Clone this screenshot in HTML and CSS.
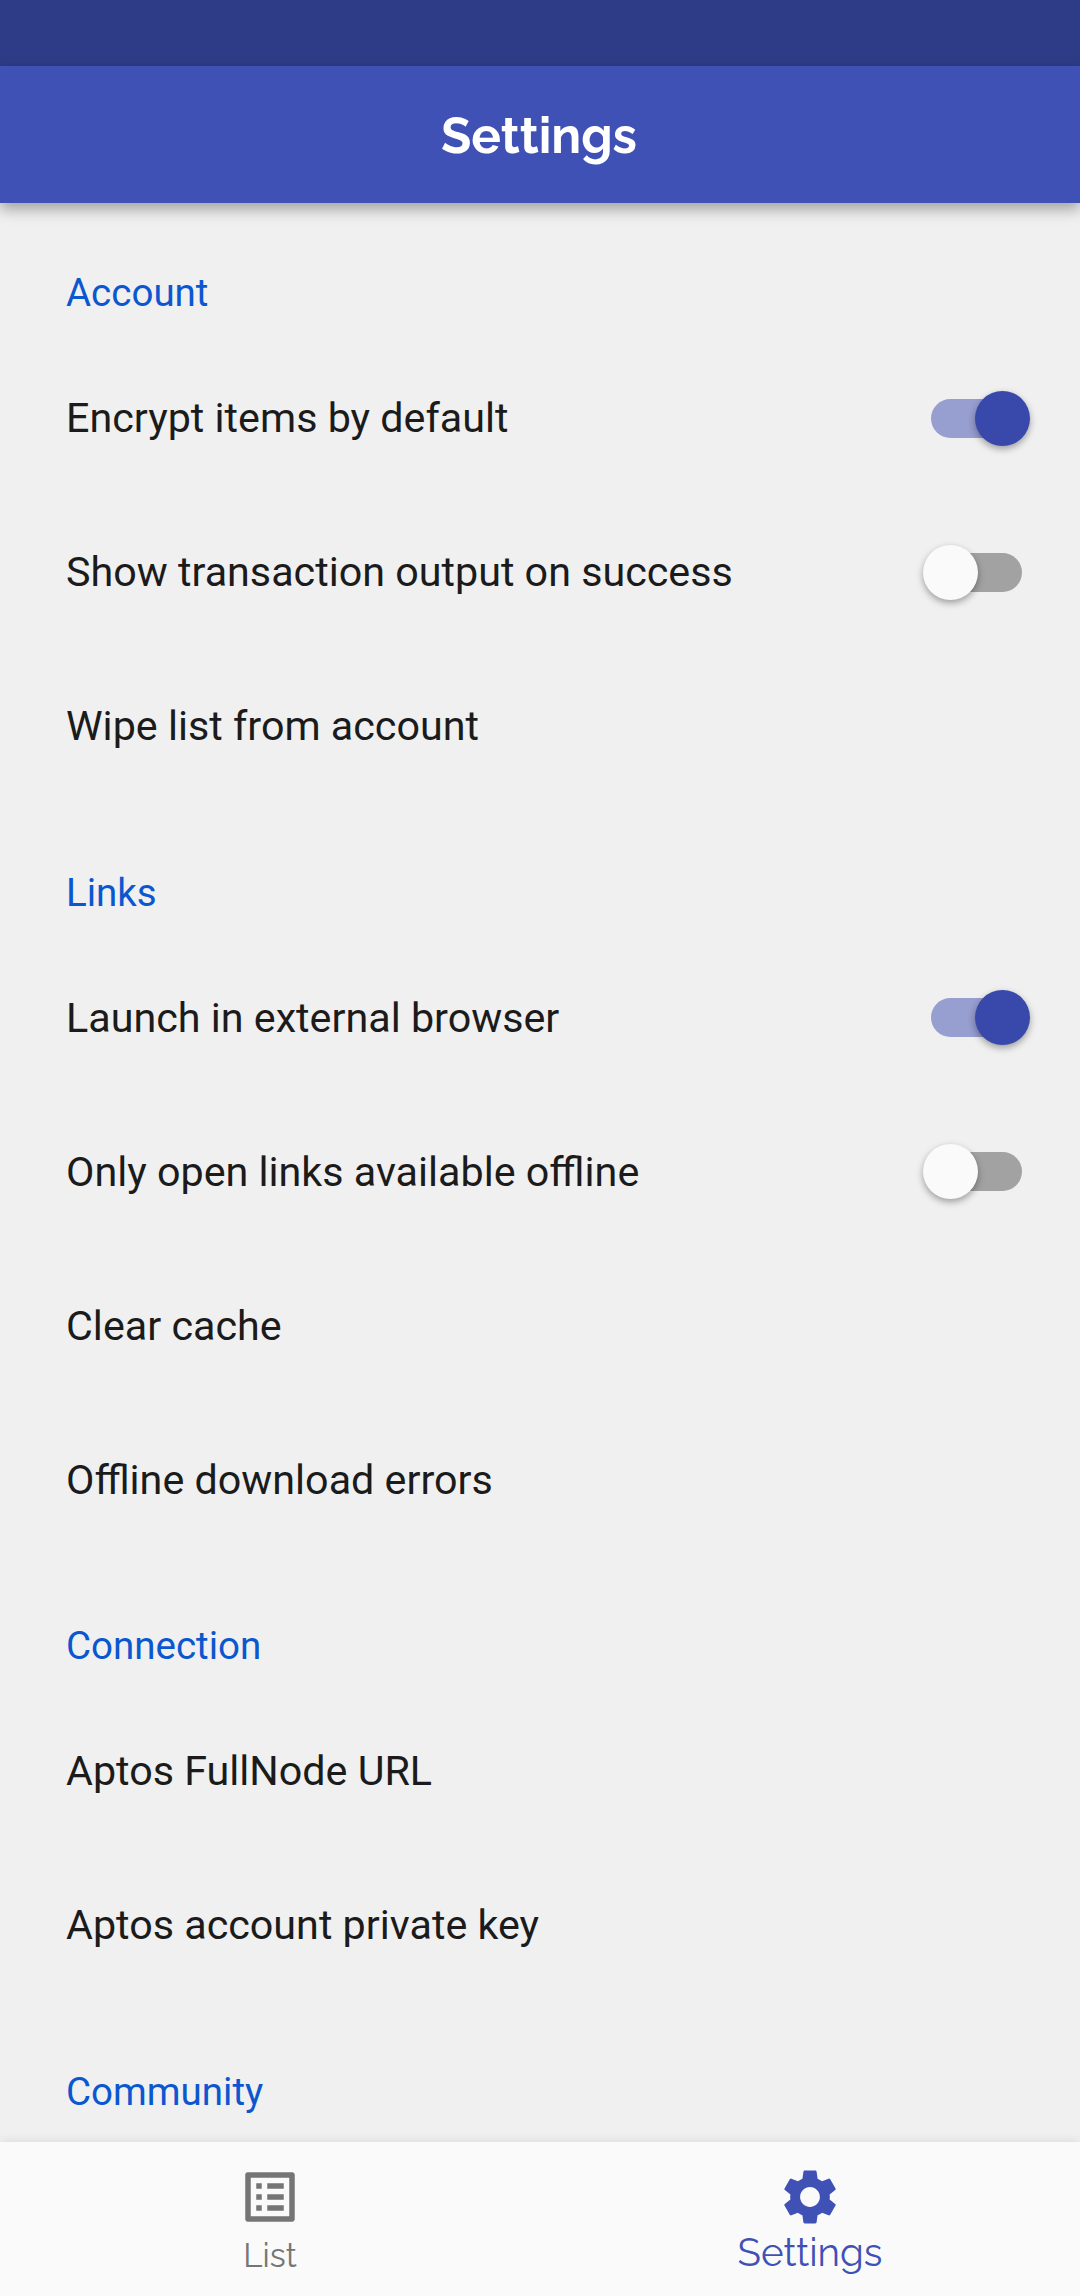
FILE: index.html
```html
<!DOCTYPE html>
<html lang="en">
<head>
<meta charset="utf-8">
<title>Settings</title>
<link rel="stylesheet" href="styles.css">
</head>
<body>
<div class="status-bar"></div>
<header class="app-bar"><h1 class="title">Settings</h1></header>
<main class="settings">
  <section class="group">
    <h2 class="group-title">Account</h2>
    <div class="row"><span>Encrypt items by default</span><div class="switch on"><i class="thumb"></i></div></div>
    <div class="row"><span>Show transaction output on success</span><div class="switch"><i class="thumb"></i></div></div>
    <div class="row"><span>Wipe list from account</span></div>
  </section>
  <section class="group">
    <h2 class="group-title">Links</h2>
    <div class="row"><span>Launch in external browser</span><div class="switch on"><i class="thumb"></i></div></div>
    <div class="row"><span>Only open links available offline</span><div class="switch"><i class="thumb"></i></div></div>
    <div class="row"><span>Clear cache</span></div>
    <div class="row"><span>Offline download errors</span></div>
  </section>
  <section class="group">
    <h2 class="group-title">Connection</h2>
    <div class="row"><span>Aptos FullNode URL</span></div>
    <div class="row"><span>Aptos account private key</span></div>
  </section>
  <section class="group">
    <h2 class="group-title">Community</h2>
  </section>
</main>
<nav class="bottom-nav">
  <a class="tab">
    <svg class="icon" viewBox="0 0 24 24"><path fill="currentColor" d="M19 5v14H5V5h14m1.1-2H3.9c-.5 0-.9.4-.9.9v16.2c0 .4.4.9.9.9h16.2c.4 0 .9-.5.9-.9V3.9c0-.5-.5-.9-.9-.9zM11 7h6v2h-6V7zm0 4h6v2h-6v-2zm0 4h6v2h-6zM7 7h2v2H7zm0 4h2v2H7zm0 4h2v2H7z"/></svg>
    <span class="tab-label">List</span>
  </a>
  <a class="tab active">
    <svg class="icon" viewBox="0 0 24 24"><path fill="currentColor" d="M19.14 12.94c.04-.3.06-.61.06-.94 0-.32-.02-.64-.07-.94l2.03-1.58c.18-.14.23-.41.12-.61l-1.92-3.32c-.12-.22-.37-.29-.59-.22l-2.39.96c-.5-.38-1.03-.7-1.62-.94l-.36-2.54c-.04-.24-.24-.41-.48-.41h-3.84c-.24 0-.43.17-.47.41l-.36 2.54c-.59.24-1.13.57-1.62.94l-2.39-.96c-.22-.08-.47 0-.59.22L2.74 8.87c-.12.21-.08.47.12.61l2.03 1.58c-.05.3-.09.63-.09.94s.02.64.07.94l-2.03 1.58c-.18.14-.23.41-.12.61l1.92 3.32c.12.22.37.29.59.22l2.39-.96c.5.38 1.03.7 1.62.94l.36 2.54c.05.24.24.41.48.41h3.84c.24 0 .44-.17.47-.41l.36-2.54c.59-.24 1.13-.56 1.62-.94l2.39.96c.22.08.47 0 .59-.22l1.92-3.32c.12-.22.07-.47-.12-.61l-2.01-1.58zM12 15.6c-1.98 0-3.6-1.62-3.6-3.6s1.62-3.6 3.6-3.6 3.6 1.62 3.6 3.6-1.62 3.6-3.6 3.6z"/></svg>
    <span class="tab-label">Settings</span>
  </a>
</nav>
</body>
</html>
```
FILE: styles.css
```css
* { box-sizing: border-box; }
body {
  margin: 0;
  height: 2296px;
  display: flex;
  flex-direction: column;
  overflow: hidden;
  background: #f0f0f0;
  font-family: Roboto, sans-serif;
  color: #1b1b1b;
}
.status-bar { height: 66px; flex: none; background: #2e3c87; }
.app-bar {
  height: 137px;
  flex: none;
  display: flex;
  align-items: center;
  justify-content: center;
  padding: 2px 2px 0 0;
  background: #3f51b5;
  box-shadow: 0 6px 14px rgba(0, 0, 0, .34);
  z-index: 1;
}
.title {
  margin: 0;
  font: 700 49.5px/60px Raleway, Lato, sans-serif;
  color: #fff;
}
.settings { flex: 1; min-height: 0; overflow: hidden; padding-top: 43px; }
.group { margin-bottom: 42.5px; }
.group-title {
  margin: 0;
  padding: 0 66px;
  height: 95px;
  line-height: 93.5px;
  font-size: 38.5px;
  font-weight: 400;
  color: #0b57d0;
}
.row {
  height: 154px;
  padding: 0 58px 0 66px;
  display: flex;
  align-items: center;
  justify-content: space-between;
  font-size: 41.25px;
}
.switch {
  width: 91px;
  height: 39px;
  border-radius: 20px;
  display: flex;
  align-items: center;
  background: #a2a2a2;
}
.thumb {
  flex: none;
  width: 55px;
  height: 55px;
  margin: 0 -8px;
  border-radius: 50%;
  background: #fafafa;
  box-shadow: 0 3px 7px rgba(0, 0, 0, .35);
}
.switch.on { justify-content: flex-end; background: #979ed0; }
.switch.on .thumb { background: #3949ab; }
.bottom-nav {
  height: 154px;
  flex: none;
  display: flex;
  background: #fafafa;
  box-shadow: 0 0 11px rgba(0, 0, 0, .1);
}
.tab {
  flex: 1;
  display: flex;
  flex-direction: column;
  align-items: center;
  padding-top: 22px;
  font: 400 33px/46px Raleway, Lato, sans-serif;
  color: #757575;
}
.tab-label { margin-top: 3px; }
.icon { width: 66px; height: 66px; }
.tab.active { color: #3f51b5; font-size: 38.5px; }
.active .tab-label { margin-top: 0; }
```
